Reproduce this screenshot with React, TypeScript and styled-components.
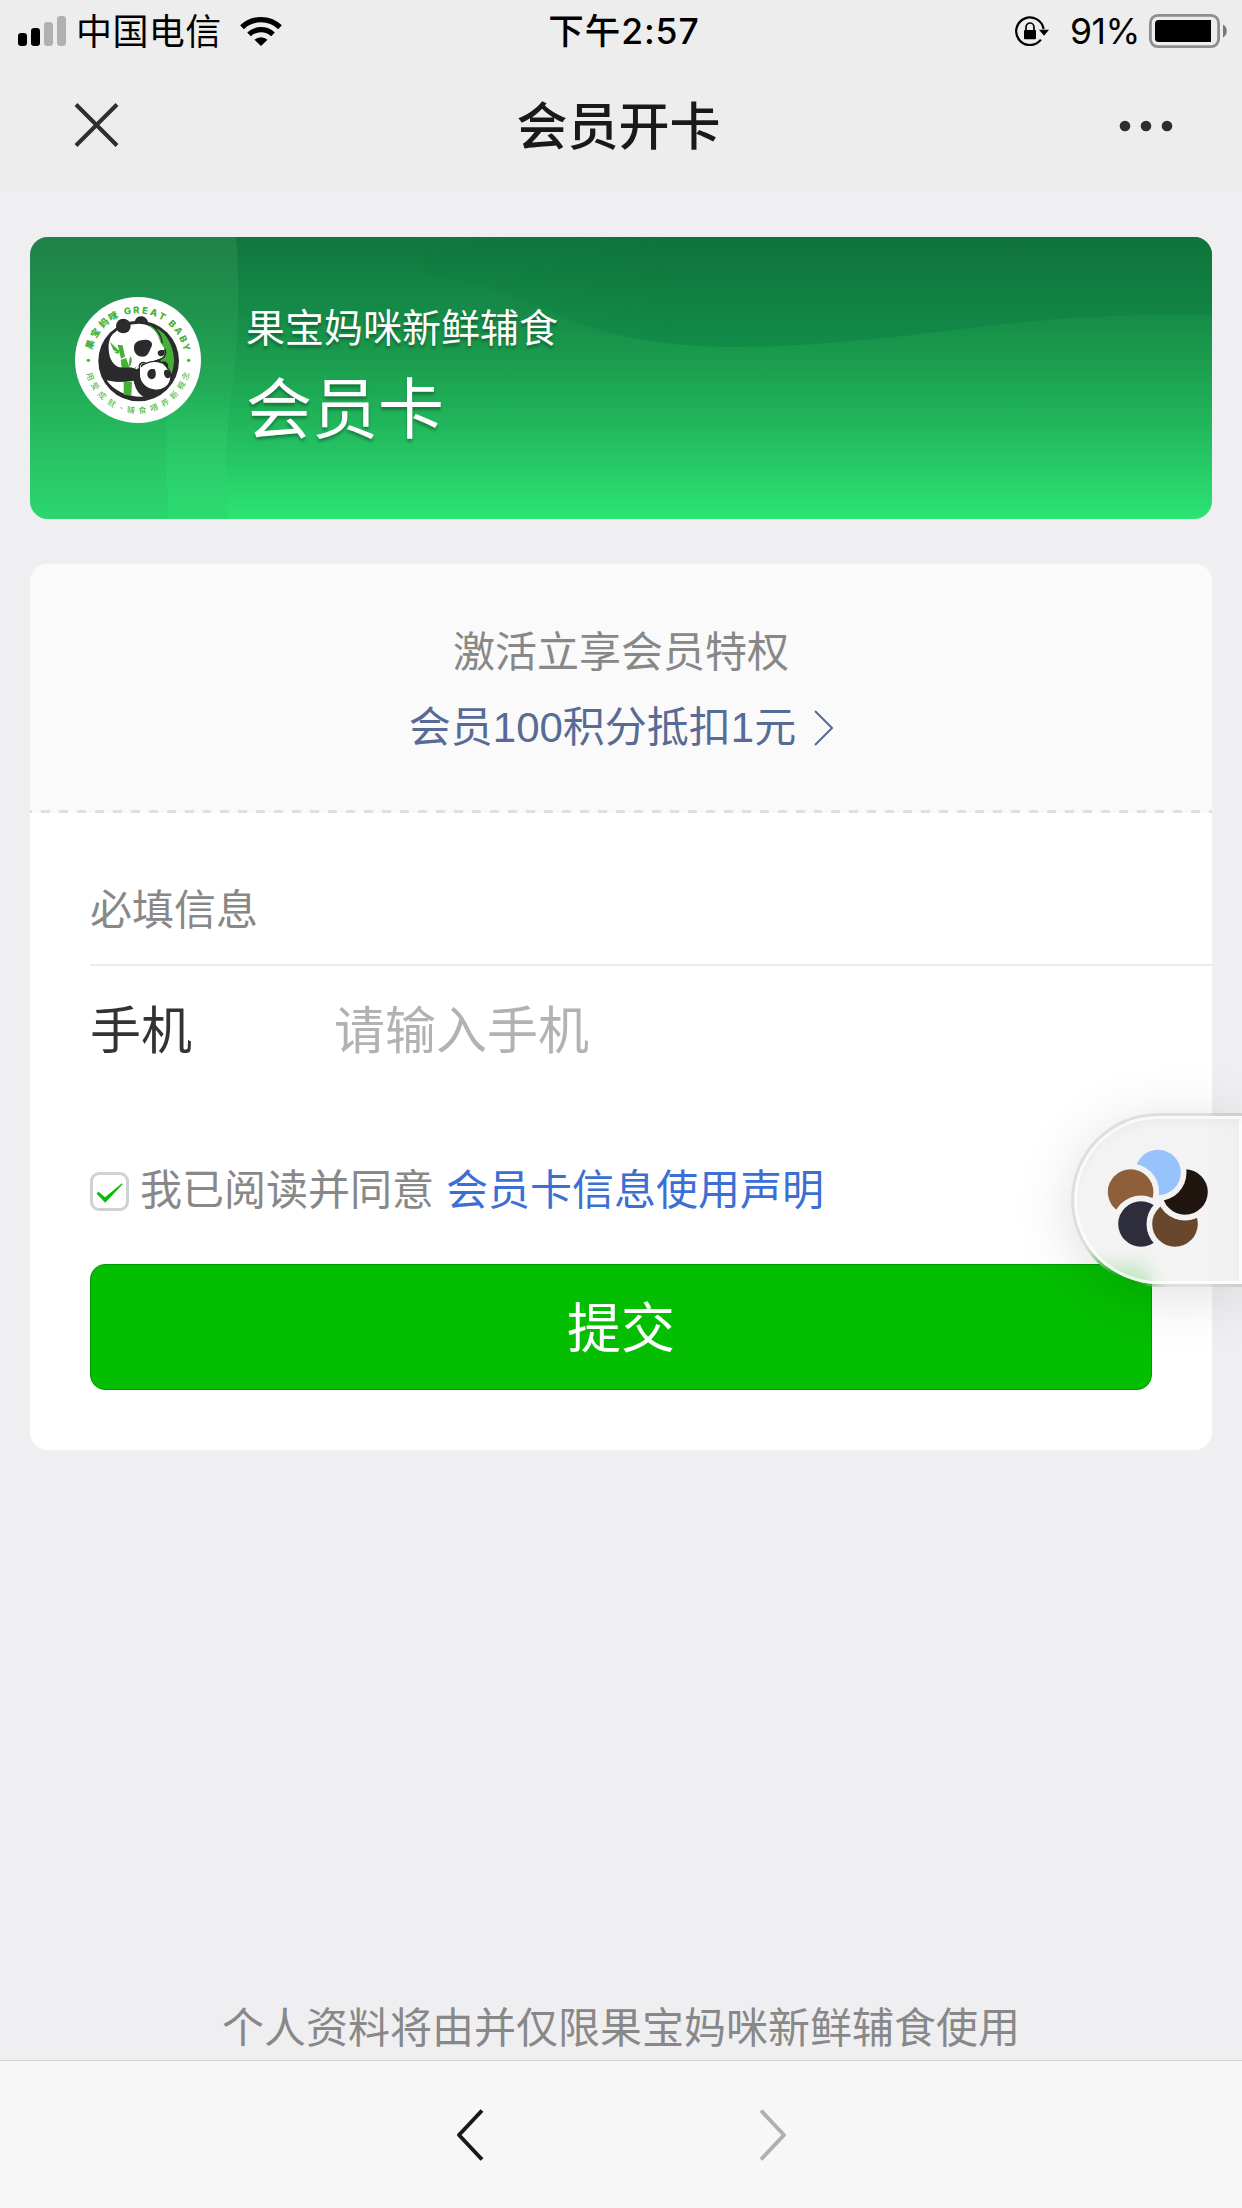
import React from 'react';
import styled, { createGlobalStyle } from 'styled-components';

const TEXT_FONTS = "'Liberation Sans', 'Noto Sans CJK SC', sans-serif";
const SYSTEM_FONTS = "Inter, 'Noto Sans CJK SC', sans-serif";

const GlobalStyle = createGlobalStyle`
  * {
    box-sizing: border-box;
  }

  body {
    background: #efeff1;
    font-family: ${TEXT_FONTS};
    margin: 0;
  }

  svg {
    display: block;
    flex: none;
  }
`;

const Screen = styled.div`
  display: flex;
  flex-direction: column;
  height: 2208px;
  overflow: hidden;
  position: relative;
  width: 1242px;
`;

const Header = styled.header`
  background: #ededed;
  height: 192px;
`;

const StatusBar = styled.div`
  align-items: center;
  color: #000;
  display: grid;
  font-family: ${SYSTEM_FONTS};
  font-size: 36px;
  grid-template-columns: 1fr auto 1fr;
  height: 60px;
  line-height: 60px;
  padding: 0 15px 0 18px;
`;

const StatusGroup = styled.div<{ $end?: boolean }>`
  align-items: center;
  display: flex;
  justify-content: ${(props) => (props.$end ? 'flex-end' : 'flex-start')};
`;

const Carrier = styled.span`
  letter-spacing: 0.4px;
  margin: 0 18px 0 10px;
  padding-top: 2px;
`;

const Clock = styled.span`
  font-size: 35.5px;
  font-weight: 500;
  letter-spacing: 0.9px;
  padding: 2px 0 0 3px;
`;

const Percent = styled.span`
  font-size: 35.5px;
  letter-spacing: -0.4px;
  margin: 0 9px 0 20px;
  padding-top: 2px;
`;

const NavBar = styled.div`
  align-items: center;
  display: grid;
  grid-template-columns: 1fr auto 1fr;
  height: 132px;
  padding: 0 66px 0 61px;
`;

const CloseIcon = styled.svg`
  margin: 0 0 2px 11px;
`;

const PageTitle = styled.h1`
  color: #191919;
  font-size: 51px;
  font-weight: 500;
  line-height: 60px;
  margin: 0;
  padding-top: 3px;
`;

const MenuDots = styled.svg`
  justify-self: end;
`;

const Content = styled.main`
  display: flex;
  flex: 1;
  flex-direction: column;
  padding: 45px 30px 0;
`;

const MemberCard = styled.section`
  align-items: flex-start;
  border-radius: 18px;
  display: grid;
  height: 282px;
  overflow: hidden;
`;

const CardArt = styled.svg`
  grid-area: 1 / 1;
`;

const CardBody = styled.div`
  display: flex;
  gap: 45px;
  grid-area: 1 / 1;
  padding: 60px 45px 0;
`;

const CardText = styled.div`
  color: #fff;
  display: flex;
  flex-direction: column;
  padding-top: 2px;
  text-shadow: 0 3px 3px rgba(0, 0, 0, 0.3);
`;

const ShopName = styled.span`
  font-size: 39px;
  line-height: 60px;
`;

const CardName = styled.span`
  font-size: 66px;
  line-height: 102px;
`;

const Panel = styled.section`
  background: #fff;
  border-radius: 18px;
  height: 886px;
  margin-top: 45px;
  overflow: hidden;
`;

const Privilege = styled.div`
  align-items: center;
  background: #fafafa;
  color: #888;
  display: flex;
  flex-direction: column;
  font-size: 42px;
  height: 249px;
  line-height: 75px;
  padding-top: 51px;
`;

const PrivilegeLink = styled.a`
  align-items: center;
  color: #576b95;
  display: flex;
  gap: 18px;
`;

const Perforation = styled.div`
  background: repeating-linear-gradient(
    90deg,
    #dfdfdf 0 1.8px,
    transparent 1.8px 10.8px,
    #dfdfdf 10.8px 17.97px
  );
  height: 3px;
  margin-top: auto;
  width: 100%;
`;

const Form = styled.div`
  padding-left: 60px;
`;

const GroupTitle = styled.div`
  border-bottom: 2px solid #ebebeb;
  color: #888;
  font-size: 42px;
  height: 153px;
  line-height: 60px;
  padding-top: 68px;
`;

const Field = styled.label`
  align-items: center;
  color: #333;
  display: flex;
  font-size: 51px;
  height: 128px;
  line-height: 72px;
  padding-top: 3px;
`;

const FieldName = styled.span`
  width: 244px;
`;

const FieldInput = styled.input`
  background: none;
  border: 0;
  flex: 1;
  font: inherit;
  height: 76px;
  outline: none;
  padding: 0;

  &::placeholder {
    color: #b2b2b2;
    opacity: 1;
  }
`;

const Agreement = styled.div`
  align-items: center;
  color: #888;
  display: flex;
  font-size: 42px;
  height: 60px;
  line-height: 60px;
  margin-top: 67px;
`;

const Checkbox = styled.span`
  align-items: center;
  border: 3px solid #d1d1d1;
  border-radius: 9px;
  display: flex;
  height: 39px;
  justify-content: center;
  margin-right: 11px;
  padding-top: 3px;
  width: 39px;
`;

const TermsLink = styled.a`
  color: #3c6fd3;
  margin-left: 12px;
`;

const Submit = styled.button`
  background: #04be02;
  border: 1px solid #039802;
  border-radius: 15px;
  color: #fff;
  display: block;
  font-family: inherit;
  font-size: 54px;
  height: 126px;
  line-height: 124px;
  margin-top: 43px;
  padding: 2px 0 0;
  width: 1062px;
`;

const Notice = styled.p`
  color: #888;
  font-size: 42px;
  line-height: 60px;
  margin: auto 0 1px;
  text-align: center;
`;

const BottomBar = styled.footer`
  align-items: center;
  background: #f7f7f7;
  border-top: 1px solid #d5d5d5;
  display: flex;
  gap: 275px;
  height: 148px;
  justify-content: center;
`;

// floats over the page, glued to the right edge
const FloatingTab = styled.div`
  align-items: center;
  backdrop-filter: blur(9px);
  background: rgba(240, 240, 240, 0.82);
  background-clip: padding-box;
  border: 3px solid rgba(0, 0, 0, 0.13);
  border-radius: 87px 0 0 87px;
  border-right: 0;
  box-shadow: 0 9px 60px rgba(0, 0, 0, 0.13), inset 0 0 0 3px rgba(255, 255, 255, 0.7),
    inset 0 8px 8px rgba(0, 0, 0, 0.03);
  display: flex;
  height: 174px;
  padding: 0 0 5px 33px;
  position: absolute;
  right: 0;
  top: 1113px;
  width: 171px;
`;

const GREEN = '#45b035';
const INK = '#2b2b2d';

type Glyph = [string, number];

const TOP_CN: Glyph[] = [
  ['果', -72],
  ['宝', -57.5],
  ['妈', -42.5],
  ['咪', -29.5],
];

const TOP_EN: Glyph[] = [
  ['G', -12],
  ['R', -2],
  ['E', 8],
  ['A', 18.5],
  ['T', 29],
  ['B', 43.5],
  ['A', 54],
  ['B', 65],
  ['Y', 75],
];

const BOTTOM_CN: Glyph[] = [
  ['用', 70.7],
  ['爱', 58.6],
  ['成', 45.5],
  ['就', 31.4],
  ['-', 19],
  ['辅', 8],
  ['食', -5],
  ['喂', -18.5],
  ['养', -32.5],
  ['新', -45.8],
  ['概', -59.8],
  ['念', -71.5],
];

type RingProps = {
  glyphs: Glyph[];
  y: number;
  size: number;
  weight: number;
  opacity?: number;
};

const Ring = ({ glyphs, y, size, weight, opacity = 1 }: RingProps) => (
  <g
    fill={GREEN}
    opacity={opacity}
    fontSize={size}
    fontWeight={weight}
    fontFamily="Inter, 'Noto Sans CJK SC', sans-serif"
    textAnchor="middle"
  >
    {glyphs.map(([char, angle], i) => (
      <text key={i} x="234" y={y} transform={`rotate(${angle} 234 240)`}>
        {char}
      </text>
    ))}
  </g>
);

const Logo = () => (
  <svg width="126" height="126" viewBox="45 51 378 378">
    <defs>
      <clipPath id="badge">
        <circle cx="236" cy="243" r="112" />
      </clipPath>
    </defs>
    <circle cx="234" cy="240" r="189" fill="#fff" />
    <Ring glyphs={TOP_CN} y={99} size={28} weight={900} />
    <Ring glyphs={TOP_EN} y={100} size={28} weight={800} />
    <Ring glyphs={BOTTOM_CN} y={400} size={24} weight={500} opacity={0.85} />
    <circle cx="85" cy="241" r="5" fill={GREEN} />
    <circle cx="386" cy="241" r="5" fill={GREEN} />
    <circle cx="236" cy="243" r="121" fill={INK} />
    <g clipPath="url(#badge)">
      <path d="M262 130C306 140 341 187 342 240C342 262 336 280 328 292L300 250L312 205Z" fill={GREEN} />
      <path
        d="M146 208C143 166 172 128 236 128C276 134 293 158 300 184C303 194 314 200 314 212C315 227 306 235 296 238L274 245C258 250 244 252 240 262L222 272C200 262 176 270 160 250C150 238 147 224 146 208Z"
        fill="#fff"
      />
      <path d="M138 300C165 308 196 306 220 300C226 322 232 336 250 350C205 352 164 334 138 300Z" fill="#fff" />
    </g>
    <path d="M272 134C294 147 306 171 307 190" fill="none" stroke={INK} strokeWidth="4" />
    <path d="M315 206C320 222 315 234 298 239L276 247" fill="none" stroke={INK} strokeWidth="4" />
    <circle cx="190" cy="138" r="22" fill={INK} />
    <path d="M224 124C228 109 244 104 256 113C262 118 265 124 264 130C250 123 238 122 224 128Z" fill={INK} />
    <path
      d="M222 207C220 190 232 179 252 180C268 177 280 187 275 199C270 208 268 222 256 229C239 234 224 224 222 207Z"
      fill={INK}
    />
    <path d="M293 218C293 211 302 208 314 211C315 222 311 229 303 229C297 228 293 224 293 218Z" fill={INK} />
    <g fill={GREEN}>
      <path d="M173 194L188 196L195 230L183 236Z" />
      <path d="M182 240L198 234L208 260L185 264Z" />
      <path d="M191 304L216 305L214 347L191 344Z" />
      <path d="M149 185L176 211L179 220L160 210Z" />
      <path d="M161 215L177 216L173 222Z" />
      <path d="M212 228C206 240 206 250 209 262C216 250 217 238 212 228Z" />
      <path d="M231 258L218 277L211 272Z" />
    </g>
    <path
      d="M120 238C128 254 146 263 168 264C190 262 210 259 228 267L238 282C242 300 244 318 262 330L252 350C234 342 226 324 222 302C196 306 158 306 132 296C120 280 116 260 120 238Z"
      fill={INK}
    />
    <path
      d="M238 262C236 250 248 244 258 250C272 244 288 242 304 248C316 242 326 252 322 264C330 272 334 284 332 297C328 320 306 333 282 330C256 326 238 306 238 284Z"
      fill="#fff"
      stroke={INK}
      strokeWidth="4"
    />
    <path d="M301 247C314 241 327 252 322 266C315 258 309 252 301 247Z" fill={INK} />
    <path d="M243 263C240 253 249 247 259 252C252 255 247 258 243 263Z" fill={INK} />
    <path d="M262 283C262 270 273 264 284 268C290 279 288 294 279 297C270 299 262 294 262 283Z" fill={INK} />
    <path d="M314 271C323 265 333 275 333 286C330 296 322 297 316 291C311 284 311 277 314 271Z" fill={INK} />
  </svg>
);

// clockwise from the top, each petal is cut by the one before it
const PETALS = [
  { x: 51, y: 25.5, fill: '#96c3fb' },
  { x: 78, y: 45, fill: '#20160f' },
  { x: 68, y: 77, fill: '#69472c' },
  { x: 34, y: 77, fill: '#2e2d3b' },
  { x: 23.6, y: 45, fill: '#8f5e3b' },
];

const Flower = () => (
  <svg width="104" height="102" viewBox="0 0 104 102">
    {PETALS.map((petal, i) => {
      const cutter = PETALS[(i + PETALS.length - 1) % PETALS.length];
      return (
        <g key={petal.fill}>
          <mask id={`petal-${i}`} maskUnits="userSpaceOnUse" x="0" y="0" width="104" height="102">
            <rect width="104" height="102" fill="#fff" />
            <circle cx={cutter.x} cy={cutter.y} r="28.5" fill="#000" />
          </mask>
          <circle cx={petal.x} cy={petal.y} r="22.8" fill={petal.fill} mask={`url(#petal-${i})`} />
        </g>
      );
    })}
  </svg>
);

const Signal = () => (
  <svg width="48" height="30" viewBox="0 0 48 30">
    <rect x="0" y="17" width="9" height="13" rx="3.2" />
    <rect x="13" y="12" width="9" height="18" rx="3.2" />
    <rect x="26" y="6" width="9" height="24" rx="3.2" fill="#b0b0b0" />
    <rect x="39" y="0" width="9" height="30" rx="3.2" fill="#b0b0b0" />
  </svg>
);

const Wifi = () => (
  <svg width="42" height="30" viewBox="0 0 42 30">
    <path d="M2 11.2A27.5 27.5 0 0 1 40 11.2" fill="none" stroke="#000" strokeWidth="5.4" />
    <path d="M9 18.4A17.5 17.5 0 0 1 33 18.4" fill="none" stroke="#000" strokeWidth="5.2" />
    <path d="M14.5 23.7A9.6 9.6 0 0 1 27.5 23.7L21 30Z" />
  </svg>
);

const RotationLock = () => (
  <svg width="35" height="30" viewBox="0 0 35 30">
    <path d="M28.6 13A13.8 13.8 0 1 0 25.9 23.7" fill="none" stroke="#000" strokeWidth="2.2" />
    <path d="M24 13.7H34L29 19.7Z" />
    <rect x="9" y="14" width="12" height="9.3" rx="1" />
    <path d="M11 14.5V11.2A4 4.2 0 0 1 19 11.2V14.5" fill="none" stroke="#000" strokeWidth="1.7" />
  </svg>
);

const Battery = () => (
  <svg width="78" height="34" viewBox="0 0 78 34">
    <rect x="1.4" y="1.4" width="68.2" height="31.2" rx="7.5" fill="none" stroke="#8e8e8e" strokeWidth="2.8" />
    <path d="M9.5 6H62V28H9.5A3.5 3.5 0 0 1 6 24.5V9.5A3.5 3.5 0 0 1 9.5 6Z" />
    <path d="M74 10.5C79 13 79 21 74 23.5Z" fill="#777" />
  </svg>
);

const App = () => (
  <Screen>
    <GlobalStyle />
    <Header>
      <StatusBar>
        <StatusGroup>
          <Signal />
          <Carrier>中国电信</Carrier>
          <Wifi />
        </StatusGroup>
        <Clock>下午2:57</Clock>
        <StatusGroup $end>
          <RotationLock />
          <Percent>91%</Percent>
          <Battery />
        </StatusGroup>
      </StatusBar>
      <NavBar>
        <CloseIcon width="50" height="50" viewBox="0 0 50 50">
          <path d="M4 4.5L45 45.5M45 4.5L4 45.5" stroke="#2e2e2e" strokeWidth="4" />
        </CloseIcon>
        <PageTitle>会员开卡</PageTitle>
        <MenuDots width="60" height="12" viewBox="0 0 60 12" fill="#2e2e2e">
          <circle cx="9" cy="6" r="5.3" />
          <circle cx="30" cy="6" r="5.3" />
          <circle cx="51" cy="6" r="5.3" />
        </MenuDots>
      </NavBar>
    </Header>

    <Content>
      <MemberCard>
        <CardArt width="1182" height="282" viewBox="0 0 1182 282">
          <defs>
            <linearGradient id="base" x1="0" y1="0" x2="0" y2="1">
              <stop offset="0" stopColor="#11763d" />
              <stop offset="0.28" stopColor="#168c49" />
              <stop offset="0.42" stopColor="#1a9b4d" />
              <stop offset="0.62" stopColor="#20b159" />
              <stop offset="0.8" stopColor="#26c866" />
              <stop offset="1" stopColor="#2ce572" />
            </linearGradient>
            <linearGradient id="wave" x1="0" y1="0" x2="0" y2="112" gradientUnits="userSpaceOnUse">
              <stop offset="0" stopColor="#10733a" />
              <stop offset="1" stopColor="#128c49" />
            </linearGradient>
            <linearGradient id="waveFade" x1="380" y1="0" x2="640" y2="0" gradientUnits="userSpaceOnUse">
              <stop offset="0" stopColor="#fff" stopOpacity="0" />
              <stop offset="1" stopColor="#fff" />
            </linearGradient>
            <mask id="waveMask">
              <rect width="1182" height="282" fill="url(#waveFade)" />
            </mask>
            <linearGradient id="side" x1="0" y1="0" x2="0" y2="1">
              <stop offset="0" stopColor="#3d9a58" stopOpacity="0.32" />
              <stop offset="0.6" stopColor="#2fb862" stopOpacity="0.25" />
              <stop offset="1" stopColor="#2cc468" stopOpacity="0.45" />
            </linearGradient>
            <linearGradient id="stripe" x1="0" y1="150" x2="0" y2="282" gradientUnits="userSpaceOnUse">
              <stop offset="0" stopColor="#2fdc70" stopOpacity="0" />
              <stop offset="0.6" stopColor="#2fdc70" stopOpacity="0.35" />
              <stop offset="1" stopColor="#2be072" stopOpacity="0.55" />
            </linearGradient>
          </defs>
          <rect width="1182" height="282" fill="url(#base)" />
          <path
            d="M206 0H1182V78C1100 76 1010 82 930 92C850 102 780 110 700 110C600 108 560 92 500 66C440 38 380 30 206 30Z"
            fill="url(#wave)"
            mask="url(#waveMask)"
          />
          <path d="M0 0H206C211 60 207 120 200 170C195 210 195 250 198 282H0Z" fill="url(#side)" />
          <path d="M138 150H202C195 200 195 250 198 282H139C136 240 135 200 138 150Z" fill="url(#stripe)" />
        </CardArt>
        <CardBody>
          <Logo />
          <CardText>
            <ShopName>果宝妈咪新鲜辅食</ShopName>
            <CardName>会员卡</CardName>
          </CardText>
        </CardBody>
      </MemberCard>

      <Panel>
        <Privilege>
          <span>激活立享会员特权</span>
          <PrivilegeLink>
            会员100积分抵扣1元
            <svg width="19" height="36" viewBox="0 0 19 36">
              <path d="M1 1L18 18L1 35" fill="none" stroke="#576b95" strokeWidth="2" />
            </svg>
          </PrivilegeLink>
          <Perforation />
        </Privilege>
        <Form>
          <GroupTitle>必填信息</GroupTitle>
          <Field>
            <FieldName>手机</FieldName>
            <FieldInput placeholder="请输入手机" />
          </Field>
          <Agreement>
            <Checkbox>
              <svg width="27" height="20" viewBox="0 0 27 20">
                <path d="M0.5 10.5L2.5 8.8L9 14.3L26 0.3L26.6 1.2L9.2 19.8Z" fill="#09bb07" />
              </svg>
            </Checkbox>
            我已阅读并同意
            <TermsLink>会员卡信息使用声明</TermsLink>
          </Agreement>
          <Submit>提交</Submit>
        </Form>
      </Panel>

      <Notice>个人资料将由并仅限果宝妈咪新鲜辅食使用</Notice>
    </Content>

    <BottomBar>
      <svg width="28" height="52" viewBox="0 0 28 52">
        <path d="M26 1.5L3 26L26 50.5" fill="none" stroke="#191919" strokeWidth="4" strokeLinejoin="round" />
      </svg>
      <svg width="28" height="52" viewBox="0 0 28 52">
        <path d="M2 1.5L25 26L2 50.5" fill="none" stroke="#b0b0b0" strokeWidth="4" strokeLinejoin="round" />
      </svg>
    </BottomBar>

    <FloatingTab>
      <Flower />
    </FloatingTab>
  </Screen>
);

export default App;
